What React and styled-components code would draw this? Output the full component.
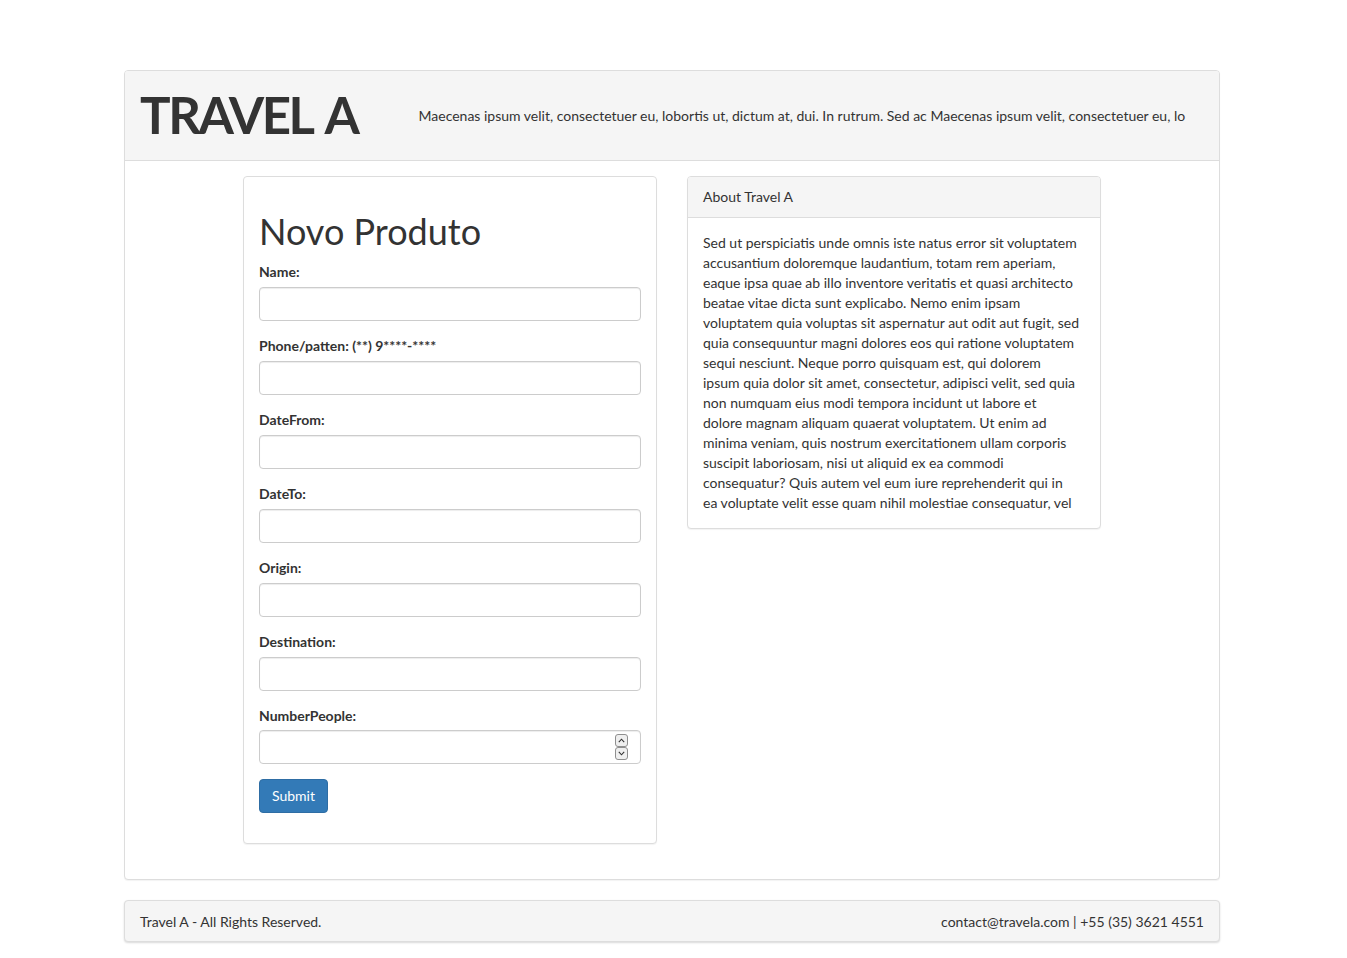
import React from "react";
import styled, { createGlobalStyle } from "styled-components";

const Global = createGlobalStyle`
  * { box-sizing: border-box; }
  html, body { margin: 0; padding: 0; background: #fff; }
  body {
    font-family: Lato, "Helvetica Neue", Arial, sans-serif;
    font-size: 14px;
    line-height: 1.42857;
    color: #333;
  }
`;

const Page = styled.div`
  padding: 70px 127px 16px 124px;
`;

const Panel = styled.div`
  background: #fff;
  border: 1px solid #ddd;
  border-radius: 4px;
  box-shadow: 0 1px 1px rgba(0, 0, 0, 0.05);
  margin-bottom: 20px;
  overflow: hidden;
`;

const Masthead = styled.div`
  display: flex;
  align-items: center;
  height: 90px;
  padding: 0 15px;
  background: #f5f5f5;
  border-bottom: 1px solid #ddd;
`;

const Brand = styled.h1`
  margin: 0;
  font-size: 51px;
  font-weight: 700;
  line-height: 1.1;
  letter-spacing: -2.4px;
  word-spacing: 5px;
  color: #333;
  flex: none;
`;

const Tagline = styled.p`
  margin: 0 0 0 61px;
  white-space: nowrap;
  overflow: hidden;
  flex: 1;
  font-size: 14px;
`;

const MainBody = styled.div`
  padding: 15px;
  display: grid;
  grid-template-columns: 414px 414px;
  column-gap: 30px;
  justify-content: center;
  align-items: start;
`;

const FormBody = styled.div`
  padding: 15px;
`;

const Title = styled.h1`
  margin: 20px 0 10px;
  font-size: 36px;
  font-weight: 400;
  line-height: 1.1;
  color: #333;
`;

const Group = styled.div`
  margin-bottom: 15px;
`;

const Label = styled.label`
  display: block;
  margin-bottom: 5px;
  font-weight: 700;
`;

const Field = styled.div`
  position: relative;
`;

const Input = styled.input`
  display: block;
  width: 100%;
  height: 34px;
  padding: 6px 12px;
  font-family: inherit;
  font-size: 14px;
  color: #555;
  background: #fff;
  border: 1px solid #ccc;
  border-radius: 4px;
  box-shadow: inset 0 1px 1px rgba(0, 0, 0, 0.075);
  outline: none;
  appearance: textfield;
  -moz-appearance: textfield;
  &::-webkit-inner-spin-button,
  &::-webkit-outer-spin-button {
    -webkit-appearance: none;
    margin: 0;
  }
`;

const Spinner = styled.div`
  position: absolute;
  top: 4px;
  right: 13px;
  display: flex;
  flex-direction: column;
  pointer-events: none;
`;

const SpinStep = styled.span`
  display: flex;
  align-items: center;
  justify-content: center;
  width: 13px;
  height: 13px;
  border: 1px solid #8f8f8f;
  border-radius: 3px;
  background: #efefef;
`;

const Button = styled.button`
  display: inline-block;
  padding: 6px 12px;
  font-family: inherit;
  font-size: 14px;
  line-height: 1.42857;
  color: #fff;
  background: #337ab7;
  border: 1px solid #2e6da4;
  border-radius: 4px;
  cursor: pointer;
`;

const Heading = styled.div`
  padding: 10px 15px;
  background: #f5f5f5;
  border-bottom: 1px solid #ddd;
`;

const Body = styled.div`
  padding: 15px;
`;

const Para = styled.p`
  margin: 0;
  white-space: nowrap;
`;

const Footer = styled.div`
  display: flex;
  justify-content: space-between;
  padding: 11px 15px 9px;
  background: #f5f5f5;
  border: 1px solid #ddd;
  border-radius: 4px;
  box-shadow: 0 1px 2px rgba(0, 0, 0, 0.15);
`;

const fields = [
  ["Name:", "text"],
  ["Phone/patten: (**) 9****-****", "text"],
  ["DateFrom:", "text"],
  ["DateTo:", "text"],
  ["Origin:", "text"],
  ["Destination:", "text"],
  ["NumberPeople:", "number"],
];

const aboutLines = [
  "Sed ut perspiciatis unde omnis iste natus error sit voluptatem",
  "accusantium doloremque laudantium, totam rem aperiam,",
  "eaque ipsa quae ab illo inventore veritatis et quasi architecto",
  "beatae vitae dicta sunt explicabo. Nemo enim ipsam",
  "voluptatem quia voluptas sit aspernatur aut odit aut fugit, sed",
  "quia consequuntur magni dolores eos qui ratione voluptatem",
  "sequi nesciunt. Neque porro quisquam est, qui dolorem",
  "ipsum quia dolor sit amet, consectetur, adipisci velit, sed quia",
  "non numquam eius modi tempora incidunt ut labore et",
  "dolore magnam aliquam quaerat voluptatem. Ut enim ad",
  "minima veniam, quis nostrum exercitationem ullam corporis",
  "suscipit laboriosam, nisi ut aliquid ex ea commodi",
  "consequatur? Quis autem vel eum iure reprehenderit qui in",
  "ea voluptate velit esse quam nihil molestiae consequatur, vel",
];

const Chevron = ({ up }) => (
  <svg width="7" height="5" viewBox="0 0 7 5" fill="none">
    <path
      d={up ? "M0.8 4.2 L3.5 1.2 L6.2 4.2" : "M0.8 0.8 L3.5 3.8 L6.2 0.8"}
      stroke="#333"
      strokeWidth="1.1"
    />
  </svg>
);

export default function App() {
  return (
    <Page>
      <Global />
      <Panel>
        <Masthead>
          <Brand>TRAVEL A</Brand>
          <Tagline>
            Maecenas ipsum velit, consectetuer eu, lobortis ut, dictum at, dui. In rutrum. Sed ac Maecenas ipsum velit, consectetuer eu, lo
          </Tagline>
        </Masthead>
        <MainBody>
          <Panel>
            <FormBody>
              <Title>Novo Produto</Title>
              <form onSubmit={(e) => e.preventDefault()}>
                {fields.map(([label, type]) => (
                  <Group key={label}>
                    <Label>{label}</Label>
                    <Field>
                      <Input type={type} />
                      {type === "number" && (
                        <Spinner>
                          <SpinStep>
                            <Chevron up />
                          </SpinStep>
                          <SpinStep>
                            <Chevron />
                          </SpinStep>
                        </Spinner>
                      )}
                    </Field>
                  </Group>
                ))}
                <Group>
                  <Button type="submit">Submit</Button>
                </Group>
              </form>
            </FormBody>
          </Panel>
          <Panel>
            <Heading>About Travel A</Heading>
            <Body>
              {aboutLines.map((l) => (
                <Para key={l}>{l}</Para>
              ))}
            </Body>
          </Panel>
        </MainBody>
      </Panel>
      <Footer>
        <span>Travel A - All Rights Reserved.</span>
        <span>contact@travela.com | +55 (35) 3621 4551</span>
      </Footer>
    </Page>
  );
}
